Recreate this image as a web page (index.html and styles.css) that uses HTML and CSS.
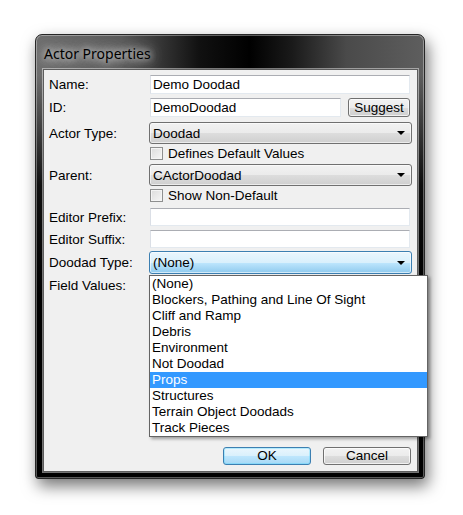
FILE: index.html
```html
<!DOCTYPE html>
<html>
<head>
<meta charset="utf-8">
<link rel="stylesheet" href="styles.css">
</head>
<body>
<div class="window">
  <div class="titlebar"><span class="title">Actor Properties</span></div>
  <div class="client">
    <div class="row h19"><span class="lbl">Name:</span><div class="input full">Demo Doodad</div></div>
    <div class="row h19 mt4"><span class="lbl">ID:</span><div class="idline"><div class="input idbox">DemoDoodad</div><div class="btn suggest">Suggest</div></div></div>
    <div class="row h22 mt5"><span class="lbl">Actor Type:</span><div class="combo">Doodad<span class="arrow"></span></div></div>
    <div class="row h15 mt2"><span></span><div class="check"><span class="box"></span>Defines Default Values</div></div>
    <div class="row h22 mt3"><span class="lbl">Parent:</span><div class="combo">CActorDoodad<span class="arrow"></span></div></div>
    <div class="row h15 mt2"><span></span><div class="check"><span class="box"></span>Show Non-Default</div></div>
    <div class="row h18 mt5"><span class="lbl">Editor Prefix:</span><div class="input full"></div></div>
    <div class="row h18 mt4"><span class="lbl">Editor Suffix:</span><div class="input full"></div></div>
    <div class="row h23 mt3"><span class="lbl">Doodad Type:</span>
      <div class="combo active">(None)<span class="arrow"></span>
        <ul class="list">
          <li>(None)</li>
          <li>Blockers, Pathing and Line Of Sight</li>
          <li>Cliff and Ramp</li>
          <li>Debris</li>
          <li>Environment</li>
          <li>Not Doodad</li>
          <li class="sel">Props</li>
          <li>Structures</li>
          <li>Terrain Object Doodads</li>
          <li>Track Pieces</li>
        </ul>
      </div>
    </div>
    <div class="row h16 mt3"><span class="lbl">Field Values:</span><span></span></div>
    <div class="buttons">
      <div class="btn ok">OK</div>
      <div class="btn">Cancel</div>
    </div>
  </div>
</div>
</body>
</html>
```
FILE: styles.css
```css
html, body {
  margin: 0;
  padding: 0;
  background: #ffffff;
}
body {
  width: 463px;
  height: 515px;
  overflow: hidden;
  font-family: "Liberation Sans", Arial, sans-serif;
  font-size: 13.5px;
  color: #000;
}
.window {
  box-sizing: border-box;
  margin: 34px 0 0 35px;
  width: 390px;
  height: 445px;
  border: 1px solid #262626;
  border-radius: 7px 7px 3px 3px;
  background:
    linear-gradient(to bottom, rgba(0,0,0,0) 0px, rgba(0,0,0,0) 40px, rgba(0,0,0,0.85) 150px, #000 260px),
    linear-gradient(to right, #6e6e6e 0%, #5a5a5a 22%, #111 42%, #000 55%, #1a1a1a 66%, #4a4a4a 80%, #5e5e5e 100%);
  box-shadow: inset 0 0 0 1px rgba(255,255,255,0.35), 3px 7px 16px rgba(0,0,0,0.55);
  display: flex;
  flex-direction: column;
}
.titlebar {
  height: 34px;
  padding-left: 8px;
  display: flex;
  align-items: center;
}
.title {
  font-family: "Noto Sans", "Open Sans", sans-serif;
  font-size: 14px;
  color: #000;
  padding-top: 2px;
  text-shadow: 0 0 6px #d0d0d0, 0 0 10px #c0c0c0, 0 0 14px #b0b0b0, 0 0 20px #a0a0a0;
}
.client {
  position: relative;
  box-sizing: border-box;
  margin: 0 6px 6px 7px;
  height: 403px;
  background: #f0f0f0;
  border: 1px solid #5d5d5d;
  box-shadow: 0 0 0 1px rgba(255,255,255,0.45);
  padding: 5px 5px 6px 5px;
  display: flex;
  flex-direction: column;
}
.row {
  display: grid;
  grid-template-columns: 100px 1fr;
  align-items: center;
}
.h15 { height: 15px; }
.h16 { height: 16px; }
.h18 { height: 18px; }
.h19 { height: 19px; }
.h22 { height: 22px; }
.h23 { height: 23px; }
.mt2 { margin-top: 2px; }
.mt3 { margin-top: 3px; }
.mt4 { margin-top: 4px; }
.mt5 { margin-top: 5px; }
.lbl {
  white-space: nowrap;
  line-height: 15px;
}
.input {
  box-sizing: border-box;
  height: 100%;
  background: #fff;
  border: 1px solid #e3e9ef;
  border-top-color: #abadb3;
  border-left-color: #dbdfe6;
  margin-left: 1px;
  margin-right: 2px;
  padding: 0 2px;
  display: flex;
  align-items: center;
  white-space: nowrap;
}
.idline {
  display: flex;
  height: 100%;
  align-items: stretch;
}
.idbox {
  width: 191px;
  margin-right: 0;
}
.btn {
  box-sizing: border-box;
  border: 1px solid #707070;
  border-radius: 3px;
  background: linear-gradient(to bottom, #f2f2f2 0%, #ebebeb 50%, #dddddd 51%, #cfcfcf 100%);
  box-shadow: inset 0 0 0 1px rgba(255,255,255,0.7);
  display: flex;
  align-items: center;
  justify-content: center;
  line-height: 14px;
}
.suggest {
  width: 62px;
  margin-left: 7px;
  height: 19px;
}
.combo {
  position: relative;
  box-sizing: border-box;
  height: 100%;
  border: 1px solid #707070;
  border-radius: 3px;
  background: linear-gradient(to bottom, #f2f2f2 0%, #ebebeb 50%, #dddddd 51%, #cfcfcf 100%);
  box-shadow: inset 0 0 0 1px rgba(255,255,255,0.6);
  padding-left: 3px;
  display: flex;
  align-items: center;
}
.combo.active {
  border-color: #3c7fb1;
  background: linear-gradient(to bottom, #eaf6fd 0%, #d9f0fc 50%, #bee6fd 51%, #8fcaee 100%);
}
.arrow {
  position: absolute;
  right: 6px;
  top: 50%;
  margin-top: -2px;
  width: 0;
  height: 0;
  border-left: 4px solid transparent;
  border-right: 4px solid transparent;
  border-top: 4px solid #000;
}
.check {
  display: flex;
  align-items: center;
  gap: 5px;
  margin-left: 1px;
  line-height: 15px;
}
.box {
  box-sizing: border-box;
  width: 13px;
  height: 13px;
  border: 1px solid #8e8f8f;
  background: linear-gradient(135deg, #dcdcdc 0%, #f6f6f6 100%);
  box-shadow: inset 0 0 0 1px #f4f4f4;
}
.list {
  position: absolute;
  left: -1px;
  top: calc(100% + 2px);
  margin: 0;
  padding: 0;
  list-style: none;
  box-sizing: border-box;
  width: 279px;
  height: 162px;
  background: #fff;
  border: 1px solid #646464;
  box-shadow: 2px 2px 3px rgba(0,0,0,0.35);
  z-index: 2;
}
.list li {
  height: 16px;
  line-height: 16px;
  padding-left: 2px;
  white-space: nowrap;
}
.list li.sel {
  background: #3399ff;
  color: #fff;
}
.buttons {
  margin-top: auto;
  display: flex;
  justify-content: flex-end;
  gap: 12px;
  padding-right: 1px;
}
.buttons .btn {
  width: 88px;
  height: 18px;
}
.buttons .btn.ok {
  border-color: #3c7fb1;
  background: linear-gradient(to bottom, #eaf6fd 0%, #d9f0fc 50%, #bee6fd 51%, #a7d9f5 100%);
  box-shadow: inset 0 0 0 1px #48d6ff55;
}
```
